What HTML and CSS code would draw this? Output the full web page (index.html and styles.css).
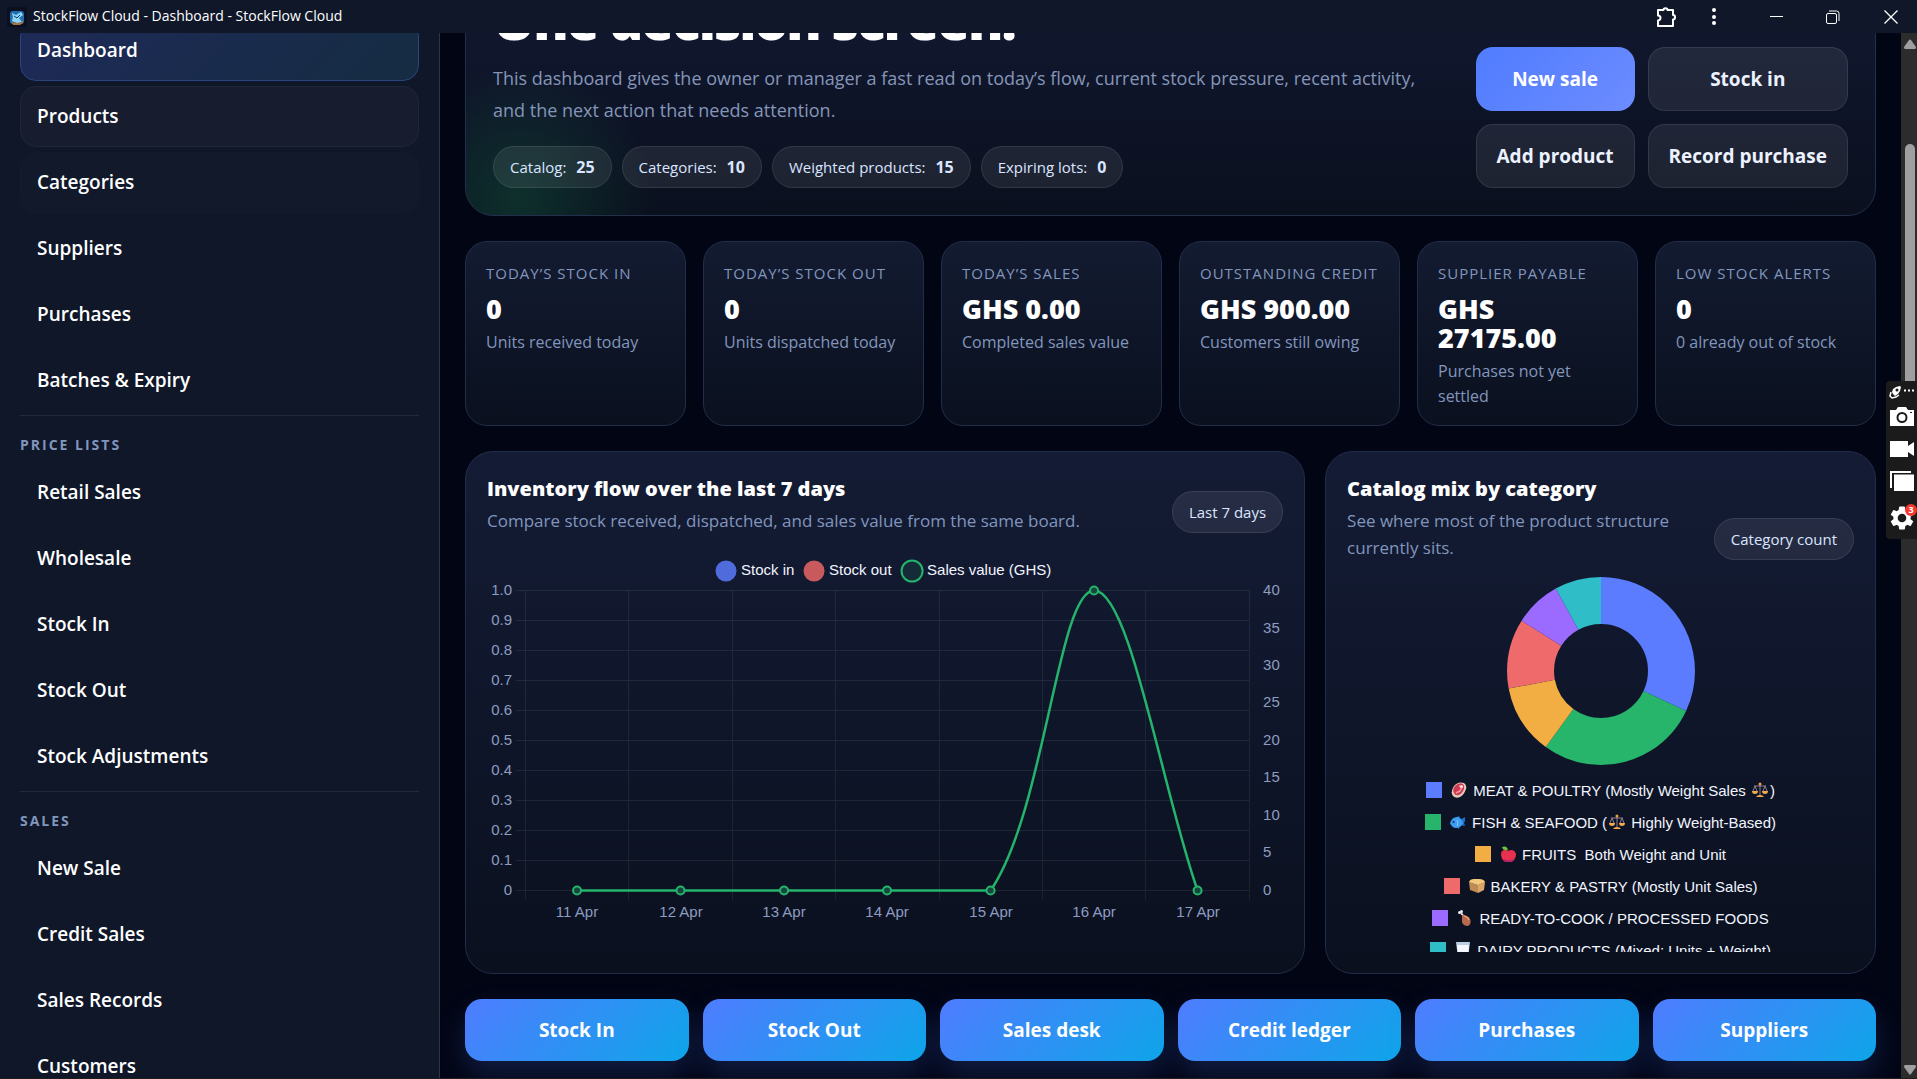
FILE: index.html
```
<!DOCTYPE html>
<html lang="en">
<head>
<meta charset="utf-8">
<title>StockFlow Cloud - Dashboard - StockFlow Cloud</title>
<link rel="stylesheet" href="styles.css">
</head>
<body>

<header class="titlebar">
	<svg class="app-icon" viewBox="0 0 20 20">
		<rect width="20" height="20" fill="#0b1020"/>
		<rect x="3" y="4" width="14" height="13" rx="3" fill="#1f6fb2"/>
		<path d="M5 6l4 2 5-3 2 3-4 3 3 4-5 1-5-2 1-4z" fill="#8fd3f5"/>
		<path d="M4 14l4 2h5l3-3v3l-3 2H6z" fill="#a8743c"/>
		<path d="M7 9l3 2 3-3" fill="none" stroke="#0d3a66" stroke-width="1"/>
	</svg>
	<span class="app-name">StockFlow Cloud - Dashboard - StockFlow Cloud</span>
	<button class="win-btn" aria-label="Extensions">
		<svg width="24" height="24" viewBox="0 0 24 24" fill="none" stroke="#fff" stroke-width="2" stroke-linejoin="round"><path d="M4 5h5.500a2 1.800 0 0 1 4 0H19v5a1.800 2 0 0 1 0 4.500V21H4v-5.500a2.500 2.500 0 0 0 0-5z"/></svg>
	</button>
	<button class="win-btn dots" aria-label="Menu">
		<svg width="24" height="24" viewBox="0 0 24 24" fill="#fff"><circle cx="12" cy="5" r="2"/><circle cx="12" cy="12" r="2"/><circle cx="12" cy="18" r="2"/></svg>
	</button>
	<button class="win-btn wide" aria-label="Minimize">
		<svg width="14" height="14" viewBox="0 0 14 14" stroke="#fff"><path d="M0 6.500h13"/></svg>
	</button>
	<button class="win-btn wide" aria-label="Restore">
		<svg width="14" height="14" viewBox="0 0 14 14" fill="none" stroke="#fff"><rect x=".5" y="3.500" width="10" height="10" rx="1.500"/><path d="M3 1h7.500a2.500 2.500 0 0 1 2.500 2.500V11"/></svg>
	</button>
	<button class="win-btn wide" aria-label="Close">
		<svg width="14" height="14" viewBox="0 0 14 14" stroke="#fff" stroke-width="1.300"><path d="M.5.5l13 13M13.500.5l-13 13"/></svg>
	</button>
</header>

<div class="app">

	<nav class="sidebar">
		<a class="nav-link active" href="#">Dashboard</a>
		<a class="nav-link hover" href="#">Products</a>
		<a class="nav-link fading" href="#">Categories</a>
		<a class="nav-link" href="#">Suppliers</a>
		<a class="nav-link" href="#">Purchases</a>
		<a class="nav-link" href="#">Batches &amp; Expiry</a>
		<h3 class="nav-heading">Price lists</h3>
		<a class="nav-link" href="#">Retail Sales</a>
		<a class="nav-link" href="#">Wholesale</a>
		<a class="nav-link" href="#">Stock In</a>
		<a class="nav-link" href="#">Stock Out</a>
		<a class="nav-link" href="#">Stock Adjustments</a>
		<h3 class="nav-heading">Sales</h3>
		<a class="nav-link" href="#">New Sale</a>
		<a class="nav-link" href="#">Credit Sales</a>
		<a class="nav-link" href="#">Sales Records</a>
		<a class="nav-link" href="#">Customers</a>
	</nav>

	<main class="content">

		<section class="hero">
			<div class="hero-copy">
				<h1>One decision screen.</h1>
				<p>This dashboard gives the owner or manager a fast read on today’s flow, current stock pressure, recent activity, and the next action that needs attention.</p>
				<div class="chips">
					<span class="chip">Catalog: <strong>25</strong></span>
					<span class="chip">Categories: <strong>10</strong></span>
					<span class="chip">Weighted products: <strong>15</strong></span>
					<span class="chip">Expiring lots: <strong>0</strong></span>
				</div>
			</div>
			<div class="hero-actions">
				<a class="btn primary" href="#">New sale</a>
				<a class="btn" href="#">Stock in</a>
				<a class="btn" href="#">Add product</a>
				<a class="btn" href="#">Record purchase</a>
			</div>
		</section>

		<section class="metrics">
			<article class="metric">
				<div class="label">Today’s stock in</div>
				<div class="value">0</div>
				<div class="note">Units received today</div>
			</article>
			<article class="metric">
				<div class="label">Today’s stock out</div>
				<div class="value">0</div>
				<div class="note">Units dispatched today</div>
			</article>
			<article class="metric">
				<div class="label">Today’s sales</div>
				<div class="value">GHS 0.00</div>
				<div class="note">Completed sales value</div>
			</article>
			<article class="metric">
				<div class="label">Outstanding credit</div>
				<div class="value">GHS 900.00</div>
				<div class="note">Customers still owing</div>
			</article>
			<article class="metric">
				<div class="label">Supplier payable</div>
				<div class="value">GHS 27175.00</div>
				<div class="note">Purchases not yet settled</div>
			</article>
			<article class="metric">
				<div class="label">Low stock alerts</div>
				<div class="value">0</div>
				<div class="note">0 already out of stock</div>
			</article>
		</section>

		<section class="charts">
			<article class="panel">
				<div class="panel-head">
					<div>
						<h2>Inventory flow over the last 7 days</h2>
						<p>Compare stock received, dispatched, and sales value from the same board.</p>
					</div>
					<span class="chip">Last 7 days</span>
				</div>
				<svg class="flow-chart" viewBox="0 -1 796 375">
					<!-- legend -->
					<g class="legend">
						<circle cx="239" cy="20" r="10.500" fill="#4f6bdc"/>
						<circle cx="327" cy="20" r="10.500" fill="#c85a5e"/>
						<circle cx="425" cy="20" r="10.500" fill="#152c38" stroke="#25b46b" stroke-width="2"/>
						<text x="254" y="24">Stock in</text>
						<text x="342" y="24">Stock out</text>
						<text x="440" y="24">Sales value (GHS)</text>
					</g>
					<!-- grid -->
					<path class="grid" d="M29 39.500H763M29 69.500H763M29 99.500H763M29 129.500H763M29 159.500H763M29 189.500H763M29 219.500H763M29 249.500H763M29 279.500H763M29 309.500H763M29 339.500H763
						M38.500 39V349M141.500 39V349M245.500 39V349M348.500 39V349M452.500 39V349M555.500 39V349M658.500 39V349M762.500 39V349"/>
					<g class="axis end">
						<text x="25" y="44">1.0</text>
						<text x="25" y="74">0.9</text>
						<text x="25" y="104">0.8</text>
						<text x="25" y="134">0.7</text>
						<text x="25" y="164">0.6</text>
						<text x="25" y="194">0.5</text>
						<text x="25" y="224">0.4</text>
						<text x="25" y="254">0.3</text>
						<text x="25" y="284">0.2</text>
						<text x="25" y="314">0.1</text>
						<text x="25" y="344">0</text>
					</g>
					<g class="axis">
						<text x="776" y="44">40</text>
						<text x="776" y="82">35</text>
						<text x="776" y="119">30</text>
						<text x="776" y="156">25</text>
						<text x="776" y="194">20</text>
						<text x="776" y="231">15</text>
						<text x="776" y="269">10</text>
						<text x="776" y="306">5</text>
						<text x="776" y="344">0</text>
					</g>
					<g class="axis middle">
						<text x="90" y="366">11 Apr</text>
						<text x="194" y="366">12 Apr</text>
						<text x="297" y="366">13 Apr</text>
						<text x="400" y="366">14 Apr</text>
						<text x="504" y="366">15 Apr</text>
						<text x="607" y="366">16 Apr</text>
						<text x="711" y="366">17 Apr</text>
					</g>
					<!-- sales value -->
					<path class="line" d="M90 339.500H503.500C558 260 571 39.500 607 39.500C643 39.500 674 235 710.500 339.500"/>
					<g class="dots">
						<circle cx="90" cy="339.500" r="4"/>
						<circle cx="193.500" cy="339.500" r="4"/>
						<circle cx="297" cy="339.500" r="4"/>
						<circle cx="400" cy="339.500" r="4"/>
						<circle cx="503.500" cy="339.500" r="4"/>
						<circle cx="607" cy="39.500" r="4"/>
						<circle cx="710.500" cy="339.500" r="4"/>
					</g>
				</svg>
			</article>

			<article class="panel">
				<div class="panel-head">
					<div>
						<h2>Catalog mix by category</h2>
						<p>See where most of the product structure currently sits.</p>
					</div>
					<span class="chip">Category count</span>
				</div>
				<div class="mix-chart">
					<!-- 8 + 7 + 3 + 3 + 2 + 2 of 25, pathLength makes one unit one product -->
					<svg class="donut" viewBox="0 0 188 188">
						<g fill="none" stroke-width="47" transform="rotate(-90 94 94)">
							<circle cx="94" cy="94" r="70.500" pathLength="25" stroke="#5b7cff" stroke-dasharray="8 17"/>
							<circle cx="94" cy="94" r="70.500" pathLength="25" stroke="#27b56b" stroke-dasharray="7 18" stroke-dashoffset="-8"/>
							<circle cx="94" cy="94" r="70.500" pathLength="25" stroke="#f2ae43" stroke-dasharray="3 22" stroke-dashoffset="-15"/>
							<circle cx="94" cy="94" r="70.500" pathLength="25" stroke="#ef6a6a" stroke-dasharray="3 22" stroke-dashoffset="-18"/>
							<circle cx="94" cy="94" r="70.500" pathLength="25" stroke="#9b6bff" stroke-dasharray="2 23" stroke-dashoffset="-21"/>
							<circle cx="94" cy="94" r="70.500" pathLength="25" stroke="#2fbdc8" stroke-dasharray="2 23" stroke-dashoffset="-23"/>
						</g>
					</svg>
					<ul class="mix-legend">
						<li>
							<i class="swatch blue"></i>
							<svg class="food" viewBox="0 0 16 16"><path d="M3 4Q7-1 13 1q3 2 2 6-2 6-6 8-4 2-7-1-3-4 1-10z" fill="#e3cbbd"/><path d="M4 4q4-4 8-2 2 2 1 5-2 5-5 6-4 1-5-2-2-3 1-7z" fill="#cf3a52"/><path d="M8 4l3 1-2 4-4 2" fill="none" stroke="#f19aa3" stroke-width="1.500"/><circle cx="10.500" cy="4.500" r="1.500" fill="#f8e4da"/></svg>
							<span>MEAT &amp; POULTRY (Mostly Weight Sales <svg class="scale" viewBox="0 0 16 16"><path d="M8 1v12M2 4h12M3 4l-2 5M3 4l2 5M13 4l-2 5M13 4l2 5" fill="none" stroke="#8f7f93" stroke-width="1"/><circle cx="8" cy="2" r="1.500" fill="#e9a23b"/><path d="M0 9h6q0 3-3 3T0 9zM10 9h6q0 3-3 3t-3-3zM4 15q1-2 4-2t4 2z" fill="#f5aa4a"/></svg>)</span>
						</li>
						<li>
							<i class="swatch green"></i>
							<svg class="food" viewBox="0 0 16 16"><path d="M10 6l5-3v4l-1 2 1 3-5-1z" fill="#1a72cf"/><path d="M5 4l4-2 2 4zM6 13l3 2 1-4z" fill="#1a72cf"/><path d="M0 9q2-6 7-6 5 1 6 6-2 5-7 5-4 0-6-5z" fill="#3d9df2"/><circle cx="3.500" cy="8" r="1" fill="#14315e"/><path d="M7 6q2 3 0 6" fill="none" stroke="#8cc9fb"/></svg>
							<span>FISH &amp; SEAFOOD (<svg class="scale" viewBox="0 0 16 16"><path d="M8 1v12M2 4h12M3 4l-2 5M3 4l2 5M13 4l-2 5M13 4l2 5" fill="none" stroke="#8f7f93" stroke-width="1"/><circle cx="8" cy="2" r="1.500" fill="#e9a23b"/><path d="M0 9h6q0 3-3 3T0 9zM10 9h6q0 3-3 3t-3-3zM4 15q1-2 4-2t4 2z" fill="#f5aa4a"/></svg> Highly Weight-Based)</span>
						</li>
						<li>
							<i class="swatch amber"></i>
							<svg class="food" viewBox="0 0 16 16"><path d="M1 9q0-5 4-5 2 0 3 1 2-1 4-1 4 1 4 5-1 6-5 7H6Q2 15 1 9z" fill="#e8314f"/><path d="M3 12q3 3 7 2 4 0 5-3-1 4-4 5H6q-2-1-3-4z" fill="#b3246b"/><path d="M2 1q5-2 6 3-5 1-6-3z" fill="#6cc43c"/><path d="M8 5V3" stroke="#6a3a2a"/></svg>
							<span>FRUITS &nbsp;Both Weight and Unit</span>
						</li>
						<li>
							<i class="swatch red"></i>
							<svg class="food" viewBox="0 0 16 16"><path d="M0 4l8-3 8 3-7 3z" fill="#f4c87c"/><path d="M0 4q1-3 5-3h5q5 0 6 3l-7 3z" fill="#f4c87c"/><path d="M0 4l9 3v8l-8-3z" fill="#c08a54"/><path d="M9 7l7-3-1 8-6 3z" fill="#dca669"/></svg>
							<span>BAKERY &amp; PASTRY (Mostly Unit Sales)</span>
						</li>
						<li>
							<i class="swatch violet"></i>
							<svg class="food" viewBox="0 0 16 16"><path d="M4 3l4 5" stroke="#e9dce6" stroke-width="2"/><circle cx="2.500" cy="2.500" r="1.500" fill="#f3e9f1"/><circle cx="4.500" cy="1.500" r="1.500" fill="#f3e9f1"/><path d="M5 5q6 0 8 4 2 5-2 7-5 0-6-4z" fill="#b8694c"/><path d="M7 6q4 1 5 4" fill="none" stroke="#e29b70" stroke-width="1.500"/></svg>
							<span>READY-TO-COOK / PROCESSED FOODS</span>
						</li>
						<li>
							<i class="swatch teal"></i>
							<svg class="food" viewBox="0 0 16 16"><path d="M1 0h14l-2 16H3z" fill="#b9cfe4"/><path d="M2 3h12l-1 12H3z" fill="#f4f7ff"/></svg>
							<span>DAIRY PRODUCTS (Mixed: Units + Weight)</span>
						</li>
					</ul>
				</div>
			</article>
		</section>

		<section class="shortcuts">
			<a class="shortcut" href="#">Stock In</a>
			<a class="shortcut" href="#">Stock Out</a>
			<a class="shortcut" href="#">Sales desk</a>
			<a class="shortcut" href="#">Credit ledger</a>
			<a class="shortcut" href="#">Purchases</a>
			<a class="shortcut" href="#">Suppliers</a>
		</section>
	</main>

	<div class="scrollbar">
		<svg width="12" height="10" viewBox="0 0 12 10"><path d="M5 1q1-1 2 0l5 7q0 2-1 2H1Q0 10 0 8z" fill="#9f9f9f"/></svg>
		<div class="track"><div class="thumb"></div></div>
		<svg width="12" height="10" viewBox="0 0 12 10"><path d="M5 9q1 1 2 0l5-7q0-2-1-2H1Q0 0 0 2z" fill="#9f9f9f"/></svg>
	</div>
</div>

<!-- capture tool docked on the screen edge -->
<div class="dock">
	<svg class="dock-top" width="26" height="14" viewBox="0 0 26 14">
		<path d="M3 7l1-3 3-2 4-1 1 1-1 4-2 3-3 2-2-2z" fill="#fff"/>
		<circle cx="8" cy="5" r="1.500" fill="#1b1b1b"/>
		<path d="M2 7l-1 4 2 2 4-1 3-2" fill="none" stroke="#fff" stroke-width="1.500"/>
		<path d="M15 5.500h2M19 5.500h2M23 5.500h2" stroke="#fff" stroke-width="2"/>
	</svg>
	<svg width="24" height="19" viewBox="0 0 24 19">
		<path d="M0 3h6l2-3h8l2 3h6v16H0z" fill="#fff"/>
		<circle cx="12" cy="10.500" r="4.500" fill="none" stroke="#1b1b1b" stroke-width="2"/><rect x="20" y="5" width="2" height="1" fill="#1b1b1b"/>
	</svg>
	<svg width="24" height="16" viewBox="0 0 24 16"><path d="M0 0h18v5l6-4v14l-6-4v5H0z" fill="#fff"/></svg>
	<svg width="24" height="20" viewBox="0 0 24 20"><path d="M1 17V1h20" fill="none" stroke="#fff" stroke-width="2"/><rect x="4" y="3.500" width="20" height="16.500" fill="#fff"/></svg>
	<span class="gear">
		<svg width="24" height="24" viewBox="2 2 20 20"><path fill="#fff" d="M19.140 12.940c.04-.3.060-.61.060-.94s-.02-.64-.07-.94l2.030-1.580a.49.49 0 0 0 .12-.61l-1.920-3.320a.49.49 0 0 0-.59-.22l-2.390.96c-.5-.38-1.030-.7-1.620-.94l-.36-2.540a.48.48 0 0 0-.48-.41h-3.840a.47.47 0 0 0-.47.41l-.36 2.540c-.59.24-1.130.57-1.620.94l-2.390-.96a.48.48 0 0 0-.59.22L2.740 8.870a.47.47 0 0 0 .12.61l2.030 1.580c-.05.3-.09.63-.09.94s.02.64.07.94l-2.030 1.580a.49.49 0 0 0-.12.61l1.920 3.320c.12.22.37.29.59.22l2.390-.96c.5.38 1.030.7 1.620.94l.36 2.540c.05.24.24.41.48.41h3.840c.24 0 .44-.17.47-.41l.36-2.540c.59-.24 1.130-.56 1.620-.94l2.390.96c.22.080.47 0 .59-.22l1.920-3.320a.47.47 0 0 0-.12-.61zM12 15.600a3.600 3.600 0 1 1 0-7.200 3.600 3.600 0 0 1 0 7.200z"/></svg>
		<b class="badge">3</b>
	</span>
</div>

</body>
</html>
```

FILE: styles.css
```
* {
	box-sizing: border-box;
}

body {
	margin: 0;
	height: 100vh;
	display: flex;
	flex-direction: column;
	overflow: hidden;
	background: #020514;
	color: #fff;
	font-family: "Open Sans", "Noto Sans", sans-serif;
}

h1, h2, h3, p, ul {
	margin: 0;
	padding: 0;
}

a {
	color: inherit;
	text-decoration: none;
}

/* title bar */
.titlebar {
	display: flex;
	align-items: center;
	flex: none;
	height: 33px;
	padding-left: 7px;
	background: #0f1729;
}

.app-icon {
	width: 20px;
	height: 20px;
}

.app-name {
	flex: 1;
	padding: 0 0 2px 6px;
	font-size: 14px;
}

.win-btn {
	display: flex;
	align-items: center;
	justify-content: center;
	width: 48px;
	height: 33px;
	padding: 0;
	border: 0;
	background: none;
}
.win-btn.dots {
	margin-right: 11px;
}
.win-btn.wide {
	width: 56px;
}
.win-btn.wide:last-child {
	padding-left: 4px;
}

.app {
	display: flex;
	flex: 1;
	min-height: 0;
	border-bottom: 1px solid #1d1d1d;
}

/* sidebar */
.sidebar {
	display: flex;
	flex-direction: column;
	flex: none;
	gap: 5px;
	width: 440px;
	padding: 0 20px;
	overflow: hidden;
	border-right: 1px solid #2b354a;
	background: #0f1729;
}

.nav-link {
	flex: none;
	height: 61px;
	padding: 0 16px;
	border: 1px solid transparent;
	border-radius: 16px;
	font-size: 19px;
	font-weight: 600;
	line-height: 58px;
}
/* scrolled halfway under the title bar */
.nav-link.active {
	margin-top: -13px;
	border-color: #2a4580;
	background: linear-gradient(135deg, #1e2a58, #152c42);
}
.nav-link.hover {
	border-color: #1e2638;
	background: #171c2f;
}
.nav-link.fading {
	border-color: #131b2d;
	background: #11192b;
}

.nav-heading {
	flex: none;
	margin: -1px 0 -5px;
	padding: 17px 0 5px;
	border-top: 1px solid #1f2a3d;
	color: #8195bd;
	font-size: 14px;
	font-weight: 700;
	line-height: 24px;
	letter-spacing: 2px;
	text-transform: uppercase;
}

/* content */
.content {
	display: flex;
	flex-direction: column;
	flex: 1;
	gap: 25px;
	min-width: 0;
	padding: 0 25px;
	overflow: hidden;
}

.hero {
	display: flex;
	align-items: flex-end;
	gap: 28px;
	flex: none;
	margin-top: -68px;
	padding: 27px;
	border: 1px solid #232f4b;
	border-radius: 28px;
	background:
		radial-gradient(circle at 52px calc(100% - 16px), rgba(24, 160, 90, .22), transparent 135px),
		linear-gradient(180deg, #131933, #0a101e);
}

.hero-copy {
	flex: 1;
}
.hero-copy h1 {
	margin-bottom: 15px;
	font-size: 53px;
	font-weight: 800;
	line-height: 54px;
	letter-spacing: -2px;
}
.hero-copy p {
	color: #8595b8;
	font-size: 18px;
	line-height: 32px;
}

.chips {
	display: flex;
	gap: 10px;
	margin-top: 20px;
}

.chip {
	flex: none;
	height: 42px;
	padding: 0 16px;
	border: 1px solid rgba(255, 255, 255, .09);
	border-radius: 21px;
	background: rgba(255, 255, 255, .08);
	color: #dbe5ff;
	font-size: 15px;
	line-height: 40px;
}
.chip strong {
	margin-left: 6px;
	font-size: 16px;
}

.hero-actions {
	display: grid;
	grid-template-columns: auto auto;
	gap: 13px;
}

.btn {
	height: 64px;
	padding: 0 20px;
	border: 1px solid rgba(255, 255, 255, .09);
	border-radius: 17px;
	background: rgba(255, 255, 255, .08);
	color: #edf2ff;
	font-size: 19px;
	font-weight: 700;
	line-height: 62px;
	text-align: center;
}
.btn.primary {
	border-color: transparent;
	background: linear-gradient(135deg, #4f7cff, #6d8cff) border-box;
	color: #fff;
}

/* metric cards */
.metrics {
	display: grid;
	grid-template-columns: repeat(6, 1fr);
	gap: 17px;
}

.metric {
	min-width: 0;
	min-height: 185px;
	padding: 19px 20px 14px;
	border: 1px solid #222d49;
	border-radius: 22px;
	background: linear-gradient(180deg, #131b31, #0a101e);
}
.metric .label {
	color: #8296bd;
	font-size: 15px;
	line-height: 24px;
	letter-spacing: 1px;
	text-transform: uppercase;
	white-space: nowrap;
}
.metric .value {
	margin: 9px 0 7px;
	font-size: 27px;
	font-weight: 800;
	line-height: 29px;
}
.metric .note {
	color: #8296bd;
	font-size: 16px;
	line-height: 25px;
}

/* chart panels */
.charts {
	display: grid;
	grid-template-columns: 1.525fr 1fr;
	gap: 20px;
}

.panel {
	min-width: 0;
	padding: 21px;
	border: 1px solid #222d49;
	border-radius: 28px;
	background: linear-gradient(180deg, #141c35, #0f162a 50%, #0a101e);
}

.panel-head {
	display: flex;
	align-items: flex-end;
	justify-content: space-between;
	gap: 16px;
	margin-bottom: 16px;
}
.panel-head h2 {
	margin-bottom: 2px;
	font-size: 20px;
	font-weight: 800;
	line-height: 32px;
}
.panel-head p {
	color: #8195bd;
	font-size: 17px;
	line-height: 27px;
}
.panel-head .chip {
	margin-bottom: 1px;
}

.flow-chart {
	display: block;
	width: 100%;
	font-family: "Liberation Sans", Arial, sans-serif;
	font-size: 15px;
}
.flow-chart .legend {
	fill: #f1f5ff;
}
.flow-chart .axis {
	fill: #8d9cc0;
}
.flow-chart .end {
	text-anchor: end;
}
.flow-chart .middle {
	text-anchor: middle;
}
.flow-chart .grid {
	stroke: rgba(255, 255, 255, .08);
}
.flow-chart .line {
	fill: none;
	stroke: #25b46b;
	stroke-width: 2.500;
}
.flow-chart .dots {
	fill: #17463f;
	stroke: #25b46b;
	stroke-width: 2;
}

.mix-chart {
	height: 375px;
	overflow: hidden;
}
.donut {
	display: block;
	width: 188px;
	margin: 0 auto;
}

.mix-legend {
	margin-top: 9px;
	list-style: none;
	color: #f1f5ff;
	font: 15px "Liberation Sans", Arial, sans-serif;
}
.mix-legend li {
	display: flex;
	align-items: center;
	justify-content: center;
	height: 32px;
	white-space: nowrap;
}
.food {
	width: 16px;
	height: 16px;
	margin-right: 6px;
}
.scale {
	width: 16px;
	height: 16px;
	margin: 0 2px;
	vertical-align: -2px;
}

.swatch {
	width: 16px;
	height: 16px;
	margin-right: 9px;
}
.blue { background: #5b7cff; }
.green { background: #27b56b; }
.amber { background: #f2ae43; }
.red { background: #ef6a6a; }
.violet { background: #9b6bff; }
.teal { background: #2fbdc8; }

/* shortcuts */
.shortcuts {
	display: grid;
	grid-template-columns: repeat(6, 1fr);
	gap: 14px;
}
.shortcut {
	height: 62px;
	border-radius: 17px;
	background: linear-gradient(135deg, #4f7cff, #0ea5e9);
	box-shadow: 0 14px 30px rgba(79, 124, 255, .2);
	font-size: 19px;
	font-weight: 700;
	line-height: 62px;
	text-align: center;
}

/* scrollbar */
.scrollbar {
	display: flex;
	flex-direction: column;
	align-items: center;
	flex: none;
	width: 16px;
	padding: 6px 0 3px 2px;
	background: #2c2c2c;
}
.track {
	flex: 1;
	width: 10px;
	padding-top: 95px;
}
.thumb {
	height: 34%;
	border-radius: 5px;
	background: #9f9f9f;
}

.dock {
	position: absolute;
	top: 381px;
	right: 0;
	display: flex;
	flex-direction: column;
	align-items: center;
	justify-content: space-between;
	width: 31px;
	height: 158px;
	padding: 4px 2px 9px 3px;
	border-radius: 4px 0 0 4px;
	background: #1b1b1b;
}
.dock-top {
	margin-bottom: -7px;
}
.gear {
	position: relative;
	height: 24px;
}
.badge {
	position: absolute;
	top: -2px;
	right: -3px;
	width: 12px;
	height: 12px;
	border-radius: 50%;
	background: #f5372f;
	font-size: 9px;
	line-height: 12px;
	text-align: center;
}
```
